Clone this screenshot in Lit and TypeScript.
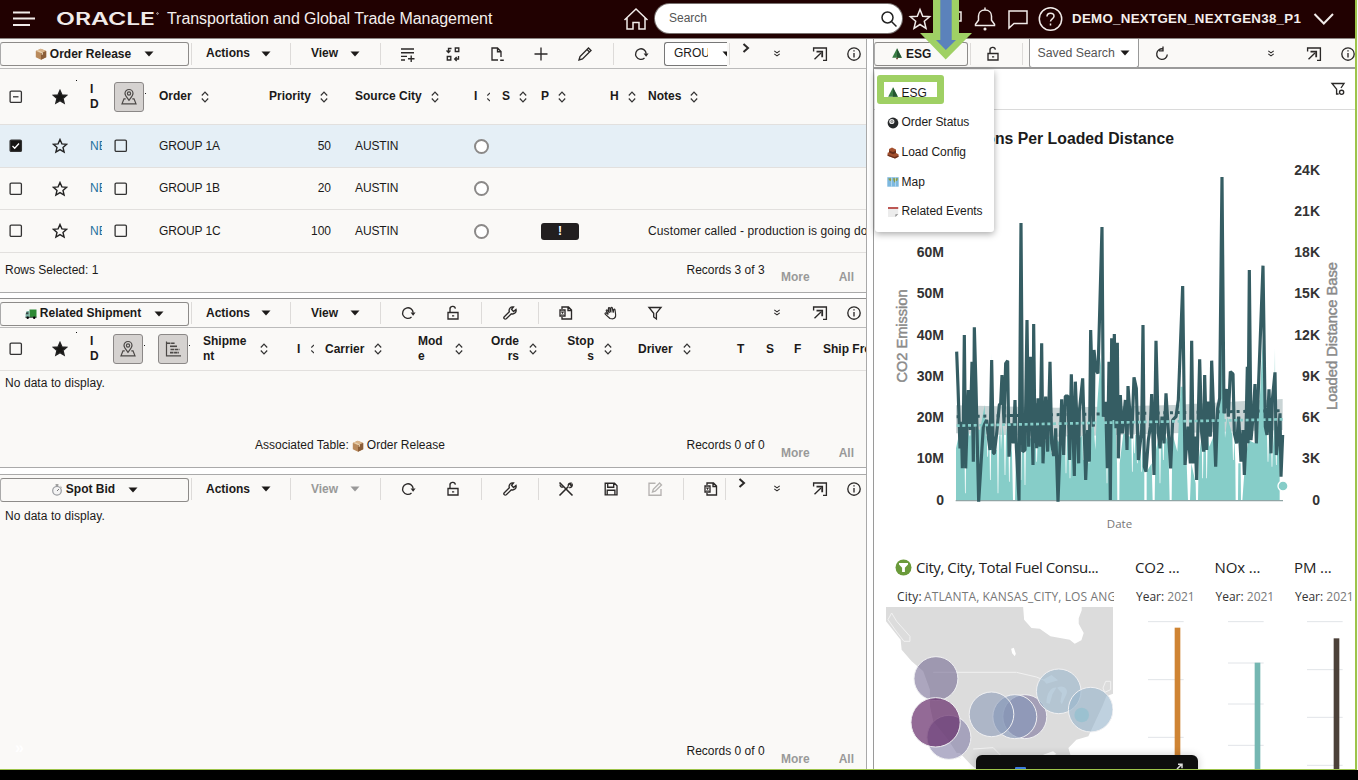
import { LitElement, html, css, svg, unsafeCSS } from "lit";
import { customElement } from "lit/decorators.js";

/** Turns a list of cell start offsets into grid tracks. */
const tracks = (starts: number[]) =>
  unsafeCSS(starts.slice(1).map((s, i) => `${+(s - starts[i]).toFixed(2)}px`).join(" ") + " 1fr");

const glyphs: Record<string, unknown> = {
  addRow: svg`<path d="M3 5h13M3 8.700h13M3 12.400h6M3 16h4M13.200 11.500v6.500M10 14.700h6.500"/>`,
  swap: svg`<path d="M12.300 4h3.500v3.500h-3.500zM4.300 12.500h3.500V16H4.300zM8.500 4.500H5.500v3M3.500 6.500l2 2 2-2M11.700 15h3.800v-3M13.700 13l-2 2 2 2"/>`,
  doc: svg`<path d="M11 16H5V4h5.500l3.500 3.500V13M10.500 4v3.700H14M13.200 16.200h3.600"/>`,
  plus: svg`<path d="M10 3.500v13M3.500 10h13"/>`,
  pencil: svg`<path d="M4 16l1-3.500L13.500 4 16 6.500 7.500 15zM12 5.600L14.500 8"/>`,
  reload: svg`<path d="M13.500 14A5.300 5.300 0 1 1 15.200 9.600"/><path class="solid" d="M12.600 9.500h5l-2.500 3.200z"/>`,
  refresh: svg`<path d="M15.300 10.500A5.300 5.300 0 1 1 11 4.900M11 2.600v4.200H7"/>`,
  pop: svg`<path d="M3.600 7.500V4h12.800v12.300H13M4.500 15.300L11 9"/><path stroke-width="1.800" d="M6.500 7.700h5.700v5.600"/>`,
  info: svg`<circle cx="10" cy="10" r="6.200"/><path d="M10 9v4.500M10 6.200v1.400"/>`,
  lock: svg`<path d="M5 9.500h10v6.500H5zM7 9.500V6.500a2.700 2.700 0 0 1 5.400-.8M9 12.900h2.200"/>`,
  wrench: svg`<path d="M4.300 13.700l5-5C8.500 6 10.500 3.500 13.500 4l-2 2.300 2 2.200L16 6.500c.8 3-2 5.200-4.700 4.300l-5 5c-1.600 1-3.300-.7-2-2.100z"/>`,
  sheet: svg`<path d="M6 6V4h6.500l3 3v9H6v-2M12 4v3.500h3.500M4 7h5v6H4zM5.500 8.500l2 3M7.500 8.500l-2 3"/>`,
  hand: svg`<path stroke-width="1.150" d="M9 15.500L4.200 11.200c-.6-.8.2-1.600 1.100-1.100l2 1.300-2-3.600c-.3-.9.700-1.300 1.300-.5l1.800 2.600-1-4.400c-.1-1 1-1.200 1.400-.2l1.100 4.100V4.900c.1-.9 1.200-.9 1.400 0l.9 4.700.6-3.100c.3-.8 1.200-.6 1.200.2l.6 4.600c.3 2.300-.6 4-2.600 4.500z"/>`,
  filter: svg`<path d="M4 4.500h12l-4.600 5.700V16L8.700 14v-3.800z"/>`,
  filterGear: svg`<path d="M13 9l3-4.500H4l4.600 5.700V15h2"/><circle cx="13.600" cy="13.300" r="2.100"/>`,
  tools: svg`<path stroke-width="1.600" d="M3.500 3.500l13 13M3.500 16.500l7.700-7.700M12.500 7.500l-1.300 1.300"/><path d="M12.300 7.200c-.4-2 1-3.400 2.700-3l-1 1.300 1 1 1.200-1c.5 1.600-1 3.300-3 3M4 5.500c0 2 1.500 3 3.200 2.600"/>`,
  save: svg`<path d="M4.200 4.200h9.300l2.500 2.500v9.100H4.200zM6.700 4.200v4h6v-4M6.200 15.800v-4.600h7.700v4.600"/>`,
  edit: svg`<path d="M10.500 4.200H4v12h12V10M7.500 13l.8-2.700 6.300-6.300L16.500 6l-6.300 6.200z"/>`,
  down: svg`<path stroke-width="1.100" d="M7.300 6.900l2.700 2 2.700-2M7.300 9.900l2.700 2 2.700-2"/>`,
  next: svg`<path stroke-width="2" d="M2.500 4L7 8l-4.500 4"/>`,
};

const ico = (name: string, cls = "") =>
  html`<svg class="ico ${cls}" width="20" height="20" viewBox="0 0 20 20">${glyphs[name]}</svg>`;

const caret = (cls = "") => html`<svg class="caret ${cls}" width="10" height="6" viewBox="0 0 10 6"><path d="M.5.500h9L5 5.500z"/></svg>`;
const div = html`<i class="vr"></i>`;
const sort = html`<svg class="sort" width="8" height="12" viewBox="0 0 8 12"><path d="M.8 4.500L4 1.200l3.200 3.300M.8 7.500L4 10.800l3.200-3.300"/></svg>`;
const sortHalf = html`<svg class="sort half" width="3" height="12" viewBox="0 0 3 12"><path d="M.3 4.500L3 2M.3 7.500L3 10"/></svg>`;
const box = (s = "") => html`<svg class="box" width="14" height="14" viewBox="0 0 14 14">
  <rect x="1.100" y="1.100" width="11.300" height="11.300" rx="1.200" class=${s === "on" ? "full" : ""}/>
  ${s === "on" ? svg`<path class="tick" d="M3.500 7l2.200 2.200 4.300-4.700"/>` : ""}
  ${s === "some" ? svg`<path d="M4 6.800h5.500"/>` : ""}</svg>`;
const star = (solid = false) => html`<svg class="star ${solid ? "solid" : ""}" width="16" height="16" viewBox="0 0 16 16">
  <path d="M8 1.500l1.900 4.400 4.700.4-3.600 3.100 1.100 4.700L8 11.600l-4.100 2.500L5 9.400 1.400 6.300l4.700-.4z"/></svg>`;
const pin = html`<span class="sq"><svg width="18" height="18" viewBox="0 0 18 18"><path d="M9 12.300C6.500 9 5 7.500 5 5.500a4 4 0 0 1 8 0c0 2-1.500 3.500-4 6.800z"/><circle cx="9" cy="5.500" r="1.600"/><path d="M5.700 10.800H4L2 15.800h14l-2-5h-1.700"/></svg></span>`;
const gantt = html`<span class="sq"><svg width="18" height="18" viewBox="0 0 18 18"><path d="M2.500 1.500v14.300H17"/><path stroke-width="1.600" stroke-dasharray="3.500 .6" d="M3 3.200h8M6.500 9.500h9M6 12.600h9"/><path stroke-width="1.600" d="M6 6.300h7"/></svg></span>`;

const parcel = html`<svg class="emo" width="12" height="12" viewBox="0 0 12 12"><path fill="#b98a5c" d="M.8 3l5-2.300L11.200 3v6.300L6 11.700.8 9.300z"/><path fill="#d9b48a" d="M.8 3l5-2.300L11.200 3 6 5.200z"/><path fill="#8b5e38" d="M6 5.200L11.200 3v6.300L6 11.700z"/><path fill="#ead8b9" d="M2.700 2.200l5.200 2.200v2L6.700 7V5L1.700 2.700z"/></svg>`;
const truck = html`<svg class="emo" width="12" height="12" viewBox="0 0 12 12"><path fill="#2f8a35" d="M4.500 1.500h7v7.700h-7z"/><path fill="#7eb6a8" d="M.6 6l1-3h2.900v6.200H.6z"/><path fill="#37433f" d="M1.400 4.200h2v2h-2.600zM.4 8.700h11.200v1H.4z"/><circle cx="2.700" cy="9.800" r="1.200"/><circle cx="9.200" cy="9.800" r="1.200"/></svg>`;
const watch = html`<svg class="emo" width="12" height="12" viewBox="0 0 12 12"><circle cx="6" cy="6.800" r="4.300" fill="#f4f4f4" stroke="#9a9ca0" stroke-width="1.200"/><path stroke="#777" d="M6 7l2-2M6 .7v1.500M4.500.9h3M9.700 2.500l.8.800"/></svg>`;
const tree = html`<svg class="emo" width="12" height="12" viewBox="0 0 12 12"><path fill="#3a7d45" d="M6 .3l4.800 9.400H1.200z"/><path fill="#245430" d="M6 .3l4.800 9.400H6z"/><path fill="#68472e" d="M5.200 9.700h1.700v1.500H5.200z"/></svg>`;
const ball = html`<svg class="emo" width="12" height="12" viewBox="0 0 12 12"><circle cx="6" cy="6" r="5.400" fill="#26282a"/><circle cx="4.800" cy="4.500" r="2.600" fill="#e9e9e9"/><circle cx="4.900" cy="4.500" r="1" fill="none" stroke="#555" stroke-width=".7"/></svg>`;
const brick = html`<svg class="emo" width="12" height="12" viewBox="0 0 12 12"><path fill="#a4512f" d="M2 2l3-1.400 4 2V6l2.500 1.300v2.500L8 11.500.6 8.700V5.800L2 5.200z"/><path fill="#6b2f1c" d="M2 3.500L6 5l3-1.500V6L6 7.200 2 5.600zM.6 7.500L7.500 10l4-1.500v1.300L8 11.500.6 8.700z"/></svg>`;
const atlas = html`<svg class="emo" width="12" height="12" viewBox="0 0 12 12"><path fill="#7db8df" d="M.3 1.200h11.400v9.500H.3z"/><path fill="#8d9b42" d="M1.300 2.500l3-.3.500 1.500-1.500 1.500L2 4zM6 2.200h5l-1 3-1.300-.6L8 7 6.700 5z"/><path fill="#c5e1f2" d="M4 1.200h.7v9.500H4zM8 1.200h.7v9.500H8z"/></svg>`;
const cal = html`<svg class="emo" width="12" height="12" viewBox="0 0 12 12"><path fill="#ececec" d="M1 1h10.200v7.200L8.500 11H1z"/><path fill="#bd5754" d="M1 1h10.200v2H1z"/><path fill="#8d8d8d" d="M11.200 8L8.500 11l-.2-2.600z"/></svg>`;

/* Line series, three units to a pixel, baseline at 542. */
const emission: number[][] = [[50,95],[54,200],[60,385],[64,305],[67,445],[70,330],[73,45],[77,445],[82,290],[85,210],[91,330],[96,125],[100,425],[103,22],[108,200],[116,545],[125,400],[130,320],[140,300],[146,360],[150,390],[155,120],[160,400],[163,400],[170,340],[178,255],[182,250],[186,165],[192,310],[197,130],[203,122],[207,410],[214,310],[220,370],[225,240],[229,380],[237,542],[243,-291],[248,395],[255,390],[261,0],[266,380],[271,110],[279,435],[281,12],[285,370],[288,250],[290,385],[294,235],[300,380],[305,70],[309,430],[317,230],[323,395],[330,125],[335,370],[341,408],[347,325],[354,545],[362,330],[365,238],[371,405],[376,228],[384,228],[389,420],[394,163],[403,468],[406,185],[416,430],[418,275],[428,175],[437,480],[443,330],[448,425],[452,30],[460,320],[462,90],[468,150],[474,160],[486,-279],[490,290],[497,245],[502,445],[507,125],[511,540],[515,55],[519,300],[523,42],[528,325],[532,68],[535,415],[541,225],[547,340],[556,240],[561,390],[564,198],[575,355],[582,172],[589,205],[595,420],[605,330],[609,15],[613,440],[618,455],[625,360],[631,320],[635,222],[642,465],[648,62],[655,340],[660,385],[666,290],[672,370],[678,220],[692,445],[698,300],[708,290],[715,240],[728,-102],[735,435],[744,320],[751,430],[755,62],[760,430],[765,350],[770,480],[779,118],[785,340],[791,395],[794,165],[800,390],[804,245],[811,350],[815,122],[827,440],[833,265],[839,235],[846,-429],[852,280],[861,207],[865,290],[871,155],[879,162],[883,340],[890,370],[896,290],[903,425],[909,330],[913,465],[917,380],[922,140],[924,370],[928,-150],[933,360],[940,280],[945,192],[949,370],[969,-163],[976,320],[981,345],[987,208],[993,400],[997,240],[1005,157],[1009,405],[1016,340],[1020,280],[1023,470],[1028,345]];
const distance: number[][] = [[48,385],[60,330],[73,320],[76,520],[80,320],[90,350],[95,320],[120,330],[134,255],[138,350],[143,410],[151,480],[154,100],[158,390],[170,390],[174,520],[178,350],[181,320],[183,390],[187,310],[195,465],[200,325],[208,485],[216,400],[219,542],[225,542],[228,390],[243,480],[255,495],[264,360],[290,425],[310,370],[335,400],[360,370],[378,460],[390,475],[400,380],[430,420],[438,470],[447,430],[460,300],[466,390],[472,250],[482,110],[492,300],[501,490],[507,350],[515,165],[527,320],[531,430],[532,542],[538,542],[539,430],[550,340],[570,350],[577,455],[583,400],[592,430],[605,455],[613,465],[613,542],[620,542],[620,455],[635,430],[638,542],[644,542],[646,400],[660,490],[670,420],[678,350],[685,370],[689,542],[695,542],[697,340],[712,395],[722,200],[728,200],[734,300],[740,430],[744,542],[750,542],[754,430],[767,490],[768,542],[774,542],[776,420],[788,475],[800,475],[808,380],[825,420],[833,330],[838,220],[846,-100],[852,220],[855,355],[862,290],[880,420],[886,430],[887,542],[894,542],[895,430],[902,430],[903,542],[907,542],[915,430],[925,360],[945,370],[955,330],[968,60],[976,330],[984,425],[996,440],[1001,380],[1005,85],[1009,435],[1014,370],[1019,400],[1019,542]];
/* Short dips are drawn as thin notches; the ones that reach the baseline keep their width. */
const filled = distance.flatMap((p, i) => {
  const touches = distance[i - 1]?.[1] === 542 || distance[i + 1]?.[1] === 542;
  return p[1] > 395 && p[1] < 542 && !touches ? [[p[0] - 3, 345], [p[0] - 1, p[1]], [p[0] + 1, p[1]], [p[0] + 3, 345]] : [p];
});
const pts = (a: number[][]) => a.map((p) => p.join(",")).join(" ");

@customElement("app-root")
export class AppRoot extends LitElement {
  static styles = css`
    :host { display: block; width: 1358px; height: 780px; overflow: hidden; background: #000; font: 12px/15px "Liberation Sans", Arial, sans-serif; color: #1c1a19; position: relative; }
    * { box-sizing: border-box; }
    svg { display: block; flex: none; }
    .screen { width: 1357px; height: 770px; border-right: 2px solid #9dc34a; border-bottom: 1px solid #9dc34a; background: #fff; overflow: hidden; position: relative; }
    .edge { position: absolute; right: 0; top: 0; width: 1px; height: 770px; background: #f6f6f4; }
    header { height: 39px; background: #210101; border-bottom: 1px solid #8b8583; display: grid; align-items: center; color: #f4eeec; padding-bottom: 1px;
      grid-template-columns: ${tracks([0, 56, 167, 623, 655, 907, 950, 973, 1006, 1038, 1072, 1313])}; }
    header svg { fill: none; stroke: #f1ebe9; stroke-width: 1.5; }
    .burger { margin-left: 13px; }
    .logo text { fill: #f1ebe9; stroke: none; font: 600 17px "Inter", "Liberation Sans", sans-serif; }
    .title { font-size: 16px; white-space: nowrap; letter-spacing: -.055px; line-height: 20px; }
    .search { width: 247px; height: 29px; border-radius: 15px; background: #fff; color: #555; display: flex; align-items: center; justify-content: space-between; padding: 0 4px 0 14px; box-shadow: 0 0 0 1px #77706e; }
    .search svg { stroke: #222; }
    .user { font-weight: 700; font-size: 13.300px; white-space: nowrap; letter-spacing: .3px; }
    main { display: grid; grid-template-columns: 867px 6px 482px; height: 730px; }
    .left { display: flex; flex-direction: column; border-right: 1px solid #a9a9a9; overflow: hidden; }
    .panel { background: #faf9f7; flex: none; }
    .p1 { height: 254px; border-bottom: 1px solid #aaa; margin-bottom: 5px; }
    .p2 { height: 170px; border-top: 1px solid #8f8f8f; border-bottom: 1px solid #aaa; margin-bottom: 6px; }
    .p3 { height: 296px; border-top: 1px solid #aaa; position: relative; }
    .bar { display: grid; height: 30px; align-items: center; border-bottom: 1px solid #bbb; font-weight: 700; white-space: nowrap; }
    .p2 .bar { height: 29px; }
    .p3 .bar { border: 0; height: 28px; margin-bottom: 1px; }
    .b1 { grid-template-columns: ${tracks([0, 191, 206, 261, 290, 311, 350, 380, 398, 443, 487, 531, 575, 613, 631, 664, 729, 741, 766.5, 810, 843.5])}; }
    .b2 { grid-template-columns: ${tracks([0, 191, 206, 261, 290, 311, 350, 380, 398, 443, 481, 500, 538, 556, 601, 645, 766.5, 810, 843.5])}; }
    .b3 { grid-template-columns: ${tracks([0, 191, 206, 261, 290, 311, 350, 380, 398, 443, 481, 500, 538, 556, 601, 645, 683, 701, 725, 737, 766.5, 810, 843.5])}; }
    .b4 { grid-template-columns: ${tracks([0, 96, 109, 148, 154.5, 277.5, 386.5, 430, 463.5])}; border-bottom: 2px solid #9a9a9a; background: #faf9f7; }
    .tab { height: 24px; width: 189px; border: 1px solid #8d8b89; border-left-color: #aaa; border-radius: 3px; display: flex; align-items: center; justify-content: center; gap: 3px; margin-top: 1px; }
    .tab .caret { margin-left: 10px; }
    .b4 .tab { width: 94px; justify-content: flex-start; padding-left: 16px; }
    .caret path { fill: #1c1a19; }
    .dim { color: #999; }
    .dim path { fill: #999; }
    .ico { fill: none; stroke: #2b2928; stroke-width: 1.35; overflow: visible; }
    .ico .solid { fill: #2b2928; stroke: none; }
    .ico.grey { stroke: #b5b3b1; }
    .next { margin-top: -8px; }
    .vr { width: 1px; height: 22px; background: #dddbd9; }
    .pick { width: 63px; height: 24px; border: 1px solid #777; border-right: 0; border-radius: 3px 0 0 3px; background: #fff; font-weight: 400; display: flex; align-items: center; justify-content: space-between; padding-left: 9px; overflow: hidden; }
    .pick b { font-weight: 400; width: 34px; overflow: hidden; }
    .pick .caret { margin-right: -5px; }
    .saved { width: 110px; height: 29px; border: 1px solid #999; border-top: 0; border-radius: 0 0 3px 3px; background: #fff; color: #555; font-weight: 400; display: flex; align-items: center; gap: 5px; padding-left: 8px; font-size: 12.300px; }
    .head, .row { display: grid; align-items: center; border-bottom: 1px solid #e2e0de; white-space: nowrap; }
    .head { font-weight: 700; }
    .h1 { height: 56px; grid-template-columns: ${tracks([0, 52, 90, 114, 159, 269, 355, 474, 502, 541, 610, 648])}; }
    .h2 { height: 43px; grid-template-columns: ${tracks([0, 52, 90, 113, 158, 203, 297, 325, 418, 491, 566, 638, 737, 766, 794, 823])}; }
    .row { height: 42px; grid-template-columns: ${tracks([0, 52, 90, 113, 159, 290, 355, 474, 541, 648])}; }
    .tall { height: 43px; }
    .sel { background: #e5eff6; }
    .cell { display: flex; align-items: center; gap: 10px; }
    .h1 .cell { gap: 9px; }
    .w1 > :first-child { width: 47px; } .w2 > :first-child { width: 27px; }
    .w3 > :first-child { width: 28px; text-align: right; }
    .half { margin-left: 1px; }
    .sort { fill: none; stroke: #333; stroke-width: 1.2; }
    .box { fill: none; stroke: #333; stroke-width: 1.3; margin-left: 9px; }
    .bx .box { margin-left: 1px; }
    .full { fill: #161513; } .tick { stroke: #fff; }
    .star { fill: none; stroke: #222; stroke-width: 1.4; }
    .star.solid { fill: #161513; }
    .sq { width: 30px; height: 30px; border: 1px solid #8b8887; border-radius: 3px; background: #d5d2d0; display: grid; place-items: center; position: relative; }
    .sq svg { fill: none; stroke: #4b4846; stroke-width: 1.2; }
    .sq::after { content: ""; position: absolute; left: 30px; top: 10px; width: 1px; height: 1px; background: #222; }
    .st { position: relative; }
    .st::after { content: ""; position: absolute; left: 24px; top: -9px; width: 1px; height: 1px; background: #111; }
    .id { width: 12px; overflow: hidden; color: #23719e; }
    .caps { letter-spacing: -.1px; }
    .note { letter-spacing: .12px; }
    .num { text-align: right; width: 41px; }
    .ring { width: 15px; height: 15px; border: 2px solid #8b8988; border-radius: 50%; background: #fff; }
    .flag { width: 38px; height: 17px; border-radius: 3px; background: #221f20; color: #fff; font-weight: 700; text-align: center; line-height: 17px; }
    .foot { display: grid; align-items: start; grid-template-columns: 255px 431.500px 109.500px 1fr; padding-top: 10px; }
    .foot p { margin: 0; white-space: nowrap; display: flex; align-items: center; gap: 3px; }
    .foot p:first-child { padding-left: 5px; }
    .foot .m { color: #999; font-weight: 700; padding-top: 7px; gap: 29px; margin-left: -15px; }
    .none { height: 15px; padding: 5px 0 0 5px; letter-spacing: .07px; }
    .p2 .foot { padding-top: 52px; }
    .p3 .foot { padding-top: 225px; }
    .p2 .foot .m, .p3 .foot .m { padding-top: 8px; }
    .ghost { position: absolute; left: 15px; top: 265px; color: #fff; font: 700 16px/16px "Liberation Sans", sans-serif; }

    .right { border-left: 1px solid #9a9a9a; background: #fff; display: flex; flex-direction: column; grid-column: 3; overflow: hidden; }
    .fbar { height: 41px; border-bottom: 1px solid #dadada; display: flex; justify-content: flex-end; align-items: center; padding-right: 7px; flex: none; }
    h2 { margin: 0; font: 700 15.800px/20px "Liberation Sans", sans-serif; color: #1b1b1b; text-align: right; height: 20px; width: 300px; margin-top: 19px; white-space: nowrap; flex: none; }
    .chart { height: 387px; flex: none; margin-top: -1px; }
    .chart text { font: 700 14px "Liberation Sans", sans-serif; fill: #333; }
    .chart .ax { fill: #8a8a8a; font-weight: 400; stroke: #8a8a8a; stroke-width: .45; }
    .chart .date { font: 11.500px "Open Sans", sans-serif; fill: #777; }
    .cards { display: grid; grid-template-columns: ${tracks([0, 239, 318.5, 398])}; padding: 21px 0 0 12px; flex: 1; font-family: "Open Sans", "Noto Sans", sans-serif; }
    .card { overflow: hidden; }
    .card h3 { font-size: 15px; line-height: 22px; font-weight: 400; margin: 0; display: flex; gap: 4px; align-items: center; white-space: nowrap; letter-spacing: -.42px; color: #222; padding-left: 9px; height: 22px; }
    .card .sub { font-size: 12px; line-height: 16px; height: 16px; margin: 11px 0 2px; padding-left: 11px; width: 228px; overflow: hidden; white-space: nowrap; color: #777; letter-spacing: .13px; }
    .card .sub b { font-weight: 400; color: #333; margin-right: -1px; }
    .mini h3 { padding-left: 10px; letter-spacing: -.1px; } .card.mini .sub { letter-spacing: 0; width: auto; }
    .card.mini .sub b { margin: 0; }
    .mini svg { margin-left: 1px; }

    .menu { position: absolute; left: 875px; top: 70px; width: 119px; height: 162px; background: #fff; border-radius: 0 0 3px 3px; box-shadow: 0 2px 7px rgba(0,0,0,.35); padding: 8.400px 0 0 12px; }
    .menu div { display: flex; align-items: center; gap: 2.500px; height: 29.700px; white-space: nowrap; letter-spacing: -.02px; }
    .mark { position: absolute; left: 877px; top: 75px; width: 67px; height: 29px; border: 7px solid #9fd064; border-radius: 3px; }
    .arrow { position: absolute; left: 919px; top: 0; }
    .dock { position: absolute; left: 976px; top: 755px; width: 222px; height: 20px; background: #0d0d0d; border-radius: 6px; box-shadow: 0 0 8px rgba(0,0,0,.2); }
    .dock svg { position: absolute; left: 200px; top: 8px; fill: none; stroke: #ddd; stroke-width: 1.500; }
    .dock i { position: absolute; left: 39px; top: 12px; width: 11px; height: 3px; background: #3d7de0; border-radius: 1px; }
  `;

  private lead(icon: unknown, name: string, dim = false) {
    return html`<div class="tab">${icon}<span>${name}</span>${caret()}</div>${div}<span>Actions</span>${caret()}${div}
      <span class=${dim ? "dim" : ""}>View</span>${caret(dim ? "dim" : "")}${div}`;
  }

  private foot(a: unknown, b: unknown, n: number) {
    return html`<div class="foot"><p>${a}</p><p>${b}</p><p>Records ${n} of ${n}</p><p class="m"><span>More</span><span>All</span></p></div>`;
  }

  private mini(title: string, color: string, top: number, lines: number[]) {
    return html`<div class="card mini"><h3>${title}</h3><div class="sub"><b>Year:</b> 2021</div>
      <svg width="80" height="162" viewBox="0 202 240 486">${lines.map((y) => svg`<path stroke="#e1e4e8" stroke-width="3" d="M66 ${y}h107"/>`)}
      <rect x="146" y=${top} width="17" height="500" fill=${color}/></svg></div>`;
  }

  render() {
    const rows = [["GROUP 1A", 50], ["GROUP 1B", 20], ["GROUP 1C", 100]] as const;
    return html`
    <div class="screen">
      <header>
        <svg class="burger" width="24" height="18" viewBox="0 0 24 18"><path stroke-width="2" d="M0 2.500h17M0 8.500h22M0 15h17"/></svg>
        <svg class="logo" width="106" height="22" viewBox="0 0 106 22"><text x="0" y="17.300" textLength="99" lengthAdjust="spacingAndGlyphs">ORACLE</text><circle cx="101.500" cy="5.500" r=".8" stroke-width=".7"/></svg>
        <span class="title">Transportation and Global Trade Management</span>
        <svg width="26" height="24" viewBox="0 0 26 24"><path d="M1.500 13L13 2l11.500 11M4 11v11h6v-6.500h6V22h6V11"/></svg>
        <div class="search"><span>Search</span><svg width="18" height="18" viewBox="0 0 18 18"><circle cx="7.500" cy="7.500" r="5.500"/><path d="M11.500 11.500l5 5"/></svg></div>
        <svg width="26" height="24" viewBox="0 0 26 24"><path d="M13 2.500l2.700 6.700 7 .5-5.400 4.600 1.700 7-6-3.800-6 3.800 1.700-7-5.400-4.600 7-.5z"/></svg>
        <svg width="14" height="24" viewBox="0 0 14 24"><path d="M2 5h9v9H4"/></svg>
        <svg width="24" height="26" viewBox="0 0 24 26"><path d="M2.500 19.500v-1.300l3-4V10c0-3.500 2.500-6 6.500-6s6.500 2.500 6.500 6v4.200l3 4v1.300zM12 4V1.500"/><circle cx="12" cy="23" r=".8"/></svg>
        <svg width="24" height="24" viewBox="0 0 24 24"><path d="M3 4h18v12.500H8l-5 4.500z"/></svg>
        <svg width="26" height="26" viewBox="0 0 26 26"><circle cx="12.500" cy="13" r="11.200"/><path d="M9 10.500c0-2 1.500-3.300 3.500-3.300s3.500 1.300 3.500 3c0 2.500-3.500 2.700-3.500 5.300M12.500 17.500v2"/></svg>
        <span class="user">DEMO_NEXTGEN_NEXTGEN38_P1</span>
        <svg width="22" height="14" viewBox="0 0 22 14"><path stroke-width="2" d="M1.500 2l9.300 9.500L20 2"/></svg>
      </header>
      <main>
        <section class="left">
          <div class="panel p1">
            <div class="bar b1">${this.lead(parcel, "Order Release")}${ico("addRow")}${ico("swap")}${ico("doc")}${ico("plus")}${ico("pencil")}${div}
              ${ico("reload")}<div class="pick"><b>GROUP</b>${caret()}</div>${div}${ico("next", "next")}${ico("down")}${ico("pop")}${ico("info")}</div>
            <div class="head h1">${box("some")}<span class="st">${star(true)}</span><span>I<br>D</span>${pin}
              ${["Order", "Priority", "Source City"].map((t) => html`<div class="cell"><span>${t}</span>${sort}</div>`)}
              <div class="cell"><span>I</span>${sortHalf}</div>
              ${["S", "P", "H", "Notes"].map((t) => html`<div class="cell"><span>${t}</span>${sort}</div>`)}</div>
            ${rows.map(([n, v], i) => html`<div class="row ${i === 0 ? "sel" : ""} ${i === 1 ? "" : "tall"}">${box(i === 0 ? "on" : "")}${star()}
              <span class="id">NEXT</span><span class="bx">${box()}</span><span class="caps">${n}</span><span class="num">${v}</span>
              <span class="caps">AUSTIN</span><span class="ring"></span>${i === 2 ? html`<span class="flag">!</span>` : html`<span></span>`}
              <span class="note">${i === 2 ? "Customer called - production is going down" : ""}</span></div>`)}
            ${this.foot("Rows Selected: 1", "", 3)}
          </div>
          <div class="panel p2">
            <div class="bar b2">${this.lead(truck, "Related Shipment")}${ico("reload")}${ico("lock")}${div}${ico("wrench")}${div}${ico("sheet")}${ico("hand")}${ico("filter")}${ico("down")}${ico("pop")}${ico("info")}</div>
            <div class="head h2">${box()}<span class="st">${star(true)}</span><span>I<br>D</span>${pin}${gantt}
              <div class="cell w1"><span>Shipme<br>nt</span>${sort}</div><div class="cell"><span>I</span>${sortHalf}</div>
              <div class="cell"><span>Carrier</span>${sort}</div><div class="cell w2"><span>Mod<br>e</span>${sort}</div>
              <div class="cell w3"><span>Orde<br>rs</span>${sort}</div><div class="cell w3"><span>Stop<br>s</span>${sort}</div>
              <div class="cell"><span>Driver</span>${sort}</div><span>T</span><span>S</span><span>F</span><span>Ship From</span></div>
            <div class="none">No data to display.</div>
            ${this.foot("", html`Associated Table: ${parcel} Order Release`, 0)}
          </div>
          <div class="panel p3">
            <div class="bar b3">${this.lead(watch, "Spot Bid", true)}${ico("reload")}${ico("lock")}${div}${ico("wrench")}${div}${ico("tools")}${ico("save")}${ico("edit", "grey")}${div}${ico("sheet")}${div}${ico("next", "next")}${ico("down")}${ico("pop")}${ico("info")}</div>
            <div class="none">No data to display.</div>
            ${this.foot("", "", 0)}
            <span class="ghost">»</span>
          </div>
        </section>
        <section class="right">
          <div class="bar b4"><div class="tab">${tree}<span>ESG</span></div>${div}${ico("lock")}${div}<div class="saved">Saved Search ${caret()}</div>${ico("refresh")}${ico("down")}${ico("pop")}${ico("info")}</div>
          <div class="fbar">${ico("filterGear")}</div>
          <h2>CO2 Emissions Per Loaded Distance</h2>
          <svg class="chart" width="481" height="387" viewBox="874 148 481 387">
            ${[8, 7, 6, 5, 4, 3, 2, 1, 0].map((k) => svg`${k > 6 ? "" : svg`<text x="944" y=${504.500 - k * 41.250} text-anchor="end">${k ? k + "0M" : "0"}</text>`}
              <text x="1320" y=${504.500 - k * 41.250} text-anchor="end">${k ? k * 3 + "K" : "0"}</text>`)}
            <text class="ax" transform="translate(907 382.500) rotate(-90)" textLength="93" lengthAdjust="spacingAndGlyphs">CO2 Emission</text>
            <text class="ax" transform="translate(1337 410) rotate(-90)" textLength="148" lengthAdjust="spacingAndGlyphs">Loaded Distance Base</text>
            <g transform="translate(940 320) scale(.33333)">
              <path fill="#c9d4d5" d="M48 256L350 263 700 255 1028 237V330L700 340 350 350 48 340z"/>
              <polygon fill="#86cdc8" points="48,542 ${pts(filled)}"/>
              <path stroke="#8fa5a5" stroke-width="4" d="M47 542H1029"/>
              <path stroke="#355d63" stroke-width="9" fill="none" stroke-dasharray="9 11" d="M50 290L350 284 700 278 1028 272"/>
              <polyline fill="none" stroke="#355d63" stroke-width="9.500" stroke-linejoin="bevel" points=${pts(emission)}/>
              <path stroke="#86cdc8" stroke-width="8" fill="none" stroke-dasharray="9 8" d="M50 317L350 311 1028 298"/>
              <circle cx="1029" cy="498" r="15" fill="#86cdc8" stroke="#fff" stroke-width="4"/>
            </g>
            <text class="date" x="1119.500" y="528" text-anchor="middle">Date</text>
          </svg>
          <div class="cards">
            <div class="card">
              <h3><svg width="17" height="17" viewBox="0 0 17 17"><circle cx="8.500" cy="8.500" r="8" fill="#6a9a3a"/><path fill="#fff" d="M4 4h9v1.500L9.900 8.700V13H7.100V8.700L4 5.500z"/></svg>City, City, Total Fuel Consu...</h3>
              <div class="sub"><b>City:</b> ATLANTA, KANSAS_CITY, LOS ANGELES</div>
              <svg width="227" height="162" viewBox="18 202 682 486" preserveAspectRatio="none">
                <path fill="#dcdcdc" d="M18 202H430L433 240 455 265 480 267 512 290 570 300 585 312 605 302 612 280 597 252 597 236 606 212 606 202H700V462L680 470 668 500 640 560 626 590 590 600 566 625 572 645 600 688H290L240 655 205 600 160 545 150 500 150 450 130 395 95 365 65 330 62 300 18 245z"/>
                <path fill="none" stroke="#f1f1f1" stroke-width="3" d="M24 240L35 220 50 245 90 290 90 305 72 305 45 270zM160 398H410L470 412 500 425M280 628L340 624 380 665M670 445L678 425 693 425V450L675 458z"/>
                <path fill="#fff" d="M394 327l8-3 6 18-3 8-8-9zM490 645l30-10 10 8-20 10zM230 640l10 0 45 48h-20z"/>
                <path fill="#edf1f4" d="M500 490c0-30 15-48 30-46l-12 20-8 28zM532 444c20-10 35 5 28 20l-14 30-4-8 5-25zM490 420l25-14 20 16-35 10z"/>
                <g stroke="#f0f0f2" stroke-width="3">
                  <circle cx="168" cy="417" r="66" fill="#746a93" fill-opacity=".6"/><circle cx="207" cy="593" r="66" fill="#8480a8" fill-opacity=".62"/>
                  <circle cx="167" cy="548" r="74" fill="#652b69" fill-opacity=".7"/><circle cx="435" cy="531" r="66" fill="#81799f" fill-opacity=".62"/>
                  <circle cx="405" cy="531" r="66" fill="#8295b8" fill-opacity=".58"/><circle cx="335" cy="524" r="67" fill="#8496b5" fill-opacity=".53"/>
                  <circle cx="537" cy="455" r="67" fill="#96b3ca" fill-opacity=".57"/><circle cx="633" cy="510" r="67" fill="#98b5cc" fill-opacity=".62"/></g>
                <circle cx="606" cy="526" r="22" fill="#91c1ce" fill-opacity=".7"/>
              </svg>
            </div>
            ${this.mini("CO2 ...", "#cf8433", 264, [246, 420, 593])}${this.mini("NOx ...", "#75b7b2", 369, [246, 370, 493, 617])}${this.mini("PM ...", "#4c4139", 296, [246, 390, 533, 677])}
          </div>
        </section>
      </main>
      <div class="menu"><div>${tree} ESG</div><div>${ball} Order Status</div><div>${brick} Load Config</div><div>${atlas} Map</div><div>${cal} Related Events</div></div>
      <div class="mark"></div>
      <svg class="arrow" width="54" height="60" viewBox="0 0 54 60"><path fill="#9fd064" d="M14 0H40V33H53L26.700 59.500 1 33H14z"/><path fill="#5b82bb" d="M21.300 0H32.700V40H37L26.800 50 17 40H21.300z"/></svg>
      <div class="dock"><i></i><svg width="7" height="7" viewBox="0 0 7 7"><path d="M1 6l4.500-4.500M2 1.200h4v4"/></svg></div>
    </div>
    <i class="edge"></i>`;
  }
}
